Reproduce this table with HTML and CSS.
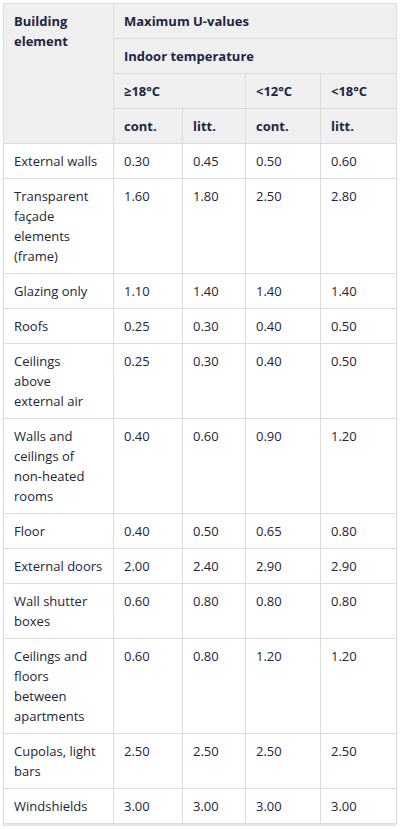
FILE: index.html
```html
<!DOCTYPE html>
<html>
<head>
<meta charset="utf-8">
<link rel="stylesheet" href="styles.css">
</head>
<body>
<div class="wrap">
<table class="uv">
<colgroup>
<col class="c1"><col class="c2"><col class="c3"><col class="c4"><col class="c5">
</colgroup>
<thead>
<tr><th rowspan="4">Building element</th><th colspan="4">Maximum U-values</th></tr>
<tr><th colspan="4">Indoor temperature</th></tr>
<tr><th colspan="2">≥18°C</th><th>&lt;12°C</th><th>&lt;18°C</th></tr>
<tr><th>cont.</th><th>litt.</th><th>cont.</th><th>litt.</th></tr>
</thead>
<tbody>
<tr><td>External walls</td><td>0.30</td><td>0.45</td><td>0.50</td><td>0.60</td></tr>
<tr><td>Transparent façade elements (frame)</td><td>1.60</td><td>1.80</td><td>2.50</td><td>2.80</td></tr>
<tr><td>Glazing only</td><td>1.10</td><td>1.40</td><td>1.40</td><td>1.40</td></tr>
<tr><td>Roofs</td><td>0.25</td><td>0.30</td><td>0.40</td><td>0.50</td></tr>
<tr><td>Ceilings<br>above external air</td><td>0.25</td><td>0.30</td><td>0.40</td><td>0.50</td></tr>
<tr><td>Walls and ceilings of non-heated rooms</td><td>0.40</td><td>0.60</td><td>0.90</td><td>1.20</td></tr>
<tr><td>Floor</td><td>0.40</td><td>0.50</td><td>0.65</td><td>0.80</td></tr>
<tr><td>External doors</td><td>2.00</td><td>2.40</td><td>2.90</td><td>2.90</td></tr>
<tr><td>Wall shutter boxes</td><td>0.60</td><td>0.80</td><td>0.80</td><td>0.80</td></tr>
<tr><td>Ceilings and floors between apartments</td><td>0.60</td><td>0.80</td><td>1.20</td><td>1.20</td></tr>
<tr><td>Cupolas, light bars</td><td>2.50</td><td>2.50</td><td>2.50</td><td>2.50</td></tr>
<tr><td>Windshields</td><td>3.00</td><td>3.00</td><td>3.00</td><td>3.00</td></tr>
</tbody>
</table>
</div>
</body>
</html>
```
FILE: styles.css
```css
html, body { margin: 0; padding: 0; background: #fff; }
body { padding: 3px; font-family: "Open Sans", "Noto Sans", sans-serif; font-size: 13px; color: #1d2538; }
.wrap { width: 393px; border-bottom: 2px solid #e6e6e6; }
.uv { border-collapse: collapse; table-layout: fixed; width: 393px; }
.c1 { width: 110px; }
.c2 { width: 69px; }
.c3 { width: 63px; }
.c4 { width: 75px; }
.c5 { width: 76px; }
.uv th, .uv td { border: 1px solid #dcdcdc; padding: 7px 10px; line-height: 20px; text-align: left; vertical-align: top; }
.uv th { background: #f0f0f0; font-weight: 700; color: #1b2647; }
```
